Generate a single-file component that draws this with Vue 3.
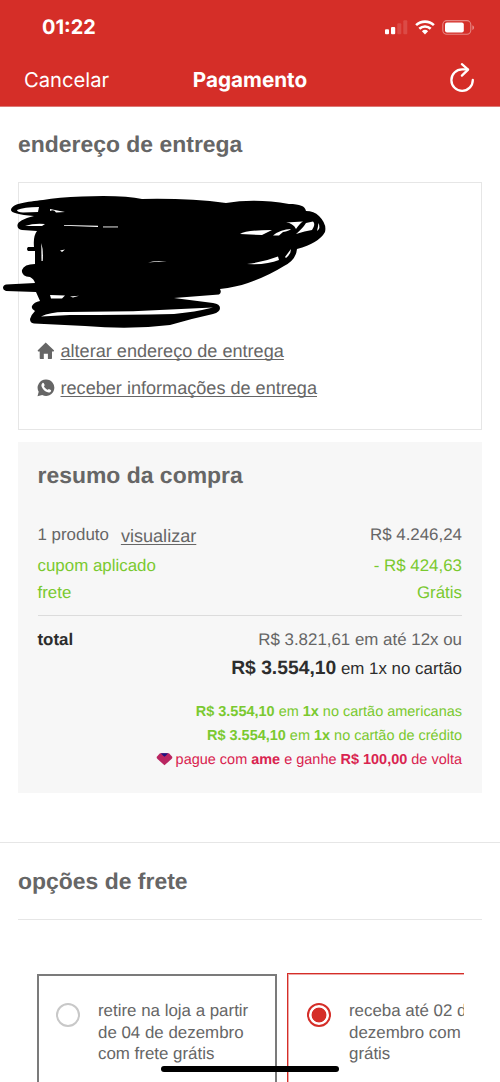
<script setup>
const rows = [
  { label: 'cupom aplicado', value: '- R$ 424,63', cls: 'coupon' },
  { label: 'frete', value: 'Grátis', cls: 'shipping' },
]
const cardOffers = ['no cartão americanas', 'no cartão de crédito']
const options = [
  { lines: ['retire na loja a partir', 'de 04 de dezembro', 'com frete grátis'], selected: false },
  { lines: ['receba até 02 de', 'dezembro com', 'grátis'], selected: true },
]
</script>

<template>
  <div class="screen">
    <header class="top">
      <div class="status">
        <span class="clock">01:22</span>
        <svg class="signals" width="92" height="18" viewBox="0 0 92 18">
          <g fill="#fff">
            <rect x="1" y="9.3" width="4" height="5" rx="1" />
            <rect x="7" y="7" width="4.2" height="7.3" rx="1" />
            <rect x="13.3" y="3.3" width="4" height="11" rx="1" opacity=".14" />
            <rect x="19.3" y="0.3" width="4" height="14" rx="1" opacity=".14" />
          </g>
          <g fill="none" stroke="#fff" stroke-width="2.6">
            <path d="M32.1 5.1a13 13 0 0 1 17.8 0" />
            <path d="M35.3 8.7a8.3 8.3 0 0 1 11.4 0" />
          </g>
          <path d="M37.9 11.3a4.5 4.5 0 0 1 6.2 0L41 14.4z" fill="#fff" />
          <rect x="58.8" y="0.6" width="28" height="13.6" rx="4" fill="none" stroke="#fff" stroke-opacity=".42" stroke-width="1.1" />
          <rect x="61" y="2.4" width="18.8" height="10" rx="2" fill="#fff" />
          <path d="M88.4 5.2c2.2 1 2.2 3.8 0 4.8z" fill="#fff" opacity=".45" />
        </svg>
      </div>
      <nav class="nav">
        <span class="cancel">Cancelar</span>
        <span class="title">Pagamento</span>
        <svg class="reload" width="26" height="32" viewBox="0 0 26 32" fill="none" stroke="#fff" stroke-width="2.3" stroke-linecap="round" stroke-linejoin="round">
          <path d="M22.800 18A10.700 10.700 0 1 1 12.100 7.400H17.500" />
          <path d="M11.900 2.200l6.200 5.400-6.200 6" />
        </svg>
      </nav>
    </header>

    <h2 class="heading address-heading">endereço de entrega</h2>
    <section class="address">
      <a class="link">
        <svg width="18" height="18" viewBox="0 0 18 18"><path d="M8.700 .6L16.900 8.300Q17.400 9.400 16.400 9.500H15V16.300Q15 17 14.300 17H10.900V11.800H6.800V17H3.400Q2.700 17 2.700 16.300V9.500H1.300Q.3 9.400.8 8.300z" fill="#666" /></svg>
        <span>alterar endereço de entrega</span>
      </a>
      <a class="link">
        <svg width="18" height="18" viewBox="0 0 18 18">
          <path d="M9.200.5a8.200 8.200 0 1 1-4 15.400L.5 17.300l1.200-4.600A8.200 8.200 0 0 1 9.200.5z" fill="#666" />
          <path d="M5.300 4.200c.7-.6 1.200-.5 1.500.1l.9 1.800c.1.600-.9 1.100-.7 1.500.7 1.400 1.900 2.500 3.300 3.200.6.200 1-.9 1.600-.9l1.900 1c.7.400.2 1.400-.4 2-1.500 1-3.400.4-5.100-.7C6.500 11 5.200 9.400 4.600 7.600c-.4-1.300-.1-2.600.700-3.400z" fill="#fff" />
        </svg>
        <span>receber informações de entrega</span>
      </a>
      <svg class="scribble" width="330" height="140" viewBox="0 190 330 140">
        <path d="M11 210C12 203 27 202 43 200Q58 197 82 196.500Q124 195 142 199Q188 198 226 203Q255 198 289 204C300 204 305 206 306 211Q314 211 319 216Q327 224 325 232Q319 243 297 249Q296 260 284 266Q268 276 248 283Q236 287 220 289Q222 293 219 294.500L174 298L213 303Q220 304 220 308Q220 312 213 314Q190 319 170 325Q130 330 85 326L34 323.500Q30 323 30 319Q31 315 35 311Q31 309 32 306Q34 302 40 301L36 292L6 291Q3 290 3 288Q3 285 6 284.500L35 283Q34 279 30 277Q21 276 22 270Q24 264 35 264V251H28Q26 249 28 247H34Q33 236 37 231L22 230Q17 229 17.500 225Q18 220 34 216Q11 214 11 210Z" fill="#000" />
        <g fill="#fff">
          <path d="M17 210Q24 207 39 207L38 212L23 212.500Q17 212 17 210Z" />
          <path d="M50 209L65 212L56 212.500Q54 209 50 211Z" />
          <path d="M25 226Q34 223 45 224L42 226Z" />
          <path d="M64 225L98 225.800V227L64 225.800Z" />
          <path d="M103 226.500H118V227.400H103Z" />
          <path d="M41.300 243Q43.500 250 42.700 261H41.500Z" />
          <path d="M60 250.500L65 249.500L62 252Z" />
          <path d="M148 262.500Q155 260 167 261.500Q157 261.500 148 262.500Z" />
          <path d="M50 295L65 295.500L62 298.500H51Z" />
          <path d="M70 296.500L79 295.800L73 297.500Z" />
          <path d="M41 316.500Q51 311.500 67 312L133 311.300L213 307.500Q195 312 174 314Q127 315 70 315Z" />
          <path d="M240 234Q246 230 272 230L262 235Z" />
          <path d="M273 235.500Q281 229 291 229Q289 231 283 232L279 235.500Z" />
          <path d="M286 222.500L303 221.500Q300 223 296 229Q293 223 286 222.500Z" />
          <path d="M296 234Q303 228 306 223L313 221.500Q316 224 312 230Q305 231 296 234Z" />
          <path d="M318.500 223Q321 228 317 231Q318 227 318.500 223Z" />
          <path d="M247 264Q264 262 278 256.500L279 260Q267 265 247 264Z" />
          <path d="M285 257L291 249Q291 254 286 258Z" />
        </g>
      </svg>
    </section>

    <section class="summary">
      <h2 class="heading">resumo da compra</h2>
      <div class="row products">
        <span>1 produto<a class="view">visualizar</a></span>
        <span>R$ 4.246,24</span>
      </div>
      <div v-for="r in rows" :key="r.label" class="row green" :class="r.cls">
        <span>{{ r.label }}</span><span>{{ r.value }}</span>
      </div>
      <div class="row total">
        <b>total</b><span>R$ 3.821,61 em até 12x ou</span>
      </div>
      <p class="cash"><b>R$ 3.554,10</b> em 1x no cartão</p>
      <p v-for="o in cardOffers" :key="o" class="offer green"><b>R$ 3.554,10</b> em <b>1x</b> {{ o }}</p>
      <p class="offer ame">
        <svg width="17" height="13" viewBox="0 0 17 13">
          <path d="M4 .2h9L16.200 3.800Q16.600 5 15.500 6L8.500 12.300L1.500 6Q.4 5 .8 3.800z" fill="#b92561" />
          <path d="M4.800.2h7.400L10 2.500 8.500 3.800 7 2.500z" fill="#1d1480" />
        </svg>
        <span>pague com <b>ame</b> e ganhe <b>R$ 100,00</b> de volta</span>
      </p>
    </section>

    <section class="freight">
      <h2 class="heading">opções de frete</h2>
      <div class="options">
        <div v-for="(o, i) in options" :key="i" class="option" :class="{ selected: o.selected }">
          <i class="radio"></i>
          <p><span v-for="l in o.lines" :key="l">{{ l }}</span></p>
        </div>
      </div>
    </section>
    <div class="home-bar"></div>
  </div>
</template>

<style>
body { background: #fff; }
</style>

<style scoped>
.screen {
  position: relative;
  width: 500px;
  height: 1082px;
  overflow: hidden;
  background: #fff;
  color: #666;
  font-family: "Liberation Sans", Arial, sans-serif;
  font-size: 16.9px;
  text-rendering: geometricPrecision;
}
.screen * { box-sizing: border-box; }
h2, p { margin: 0; }
.top {
  height: 107px;
  background: #d52e28;
  border-bottom: 1px solid #dd7975;
  color: #fff;
  font-family: Inter, sans-serif;
}
.status {
  display: flex;
  justify-content: space-between;
  height: 53px;
  padding: 16px 24px 0 42px;
}
.clock { font-size: 19.900px; line-height: 23px; font-weight: 700; }
.signals { margin-top: 4px; }
.nav {
  display: grid;
  grid-template-columns: 1fr auto 1fr;
  height: 53px;
  padding: 0 24px;
  align-items: center;
  font-size: 20.200px;
}
.title { font-size: 20.700px; font-weight: 700; }
.reload { justify-self: end; margin-top: -4px; }
.heading { font-size: 22.95px; line-height: 28px; font-weight: 700; white-space: nowrap; }
.address-heading { margin: 23px 0 0 18px; }
.address {
  position: relative;
  height: 248px;
  margin: 24px 18px 0;
  padding: 150px 18px 0;
  border: 1px solid #e6e6e6;
}
.link {
  display: flex;
  align-items: center;
  gap: 5.500px;
  height: 37px;
  font-size: 18.100px;
  text-decoration: none;
}
.link svg { margin-top: -1px; }
.link span, .view {
  text-decoration: underline;
  text-decoration-thickness: 1px;
  text-decoration-skip-ink: none;
  text-underline-offset: 1.5px;
}
.scribble { position: absolute; left: -19px; top: 7px; }
.summary {
  height: 351px;
  margin-top: 12px;
  margin-left: 18px;
  margin-right: 18px;
  padding: 19px 20px 0 19.5px;
  background: #f7f7f7;
}
.row { display: flex; justify-content: space-between; line-height: 26px; height: 26px; }
.products { margin-top: 33px; align-items: flex-end; }
.products > span { height: 26px; }
.view { display: inline-block; margin-left: 12px; font-size: 18.100px; line-height: 22px; transform: translateY(2px); }
.green { color: #7ac92f; }
.coupon { margin-top: 5px; height: 27px; }
.total {
  margin-top: 9px;
  padding-top: 11px;
  height: 38px;
  border-top: 1px solid #dcdcdc;
}
.total b, .cash { color: #2d2d2d; }
.cash { text-align: right; line-height: 28px; height: 28px; margin-top: 2px; }
.cash b { font-size: 19.300px; }
.offer { text-align: right; font-size: 14.480px; line-height: 24px; height: 24px; }
.cash + .offer { margin-top: 17px; }
.ame { display: flex; justify-content: flex-end; color: #d9234f; }
.ame svg { margin: 5px 3px 0 0; }
.freight { margin-top: 49px; border-top: 1px solid #e6e6e6; padding: 24px 18px 0; }
.freight .heading { height: 53px; border-bottom: 1px solid #e6e6e6; }
.options {
  display: flex;
  align-items: flex-start;
  gap: 10px;
  margin: 53px 18px 0 19px;
  overflow: hidden;
}
.option {
  display: flex;
  flex: none;
  width: 240px;
  height: 130px;
  margin-top: 1px;
  padding: 24px 0 0 17px;
  border: 2px solid #7b7b7b;
}
.option.selected {
  margin-top: 0;
  padding: 26px 0 0 18.500px;
  border: 1px solid #d52e28;
  box-shadow: inset 0 0 0 1px #eea9a7;
}
.radio {
  flex: none;
  width: 24px;
  height: 24px;
  margin-top: 3px;
  border: 2px solid #c8c8c8;
  border-radius: 50%;
}
.selected .radio { border-width: 2.500px; border-color: #d52e28; background: radial-gradient(circle, #d52e28 7px, #fff 7.800px); }
.option p { margin-left: 18px; white-space: nowrap; }
.selected p { margin-left: 18.500px; }
.option span { display: block; line-height: 21.700px; }
.home-bar {
  position: absolute;
  left: 161px;
  top: 1066px;
  width: 178px;
  height: 6px;
  border-radius: 3px;
  background: #000;
}
</style>
